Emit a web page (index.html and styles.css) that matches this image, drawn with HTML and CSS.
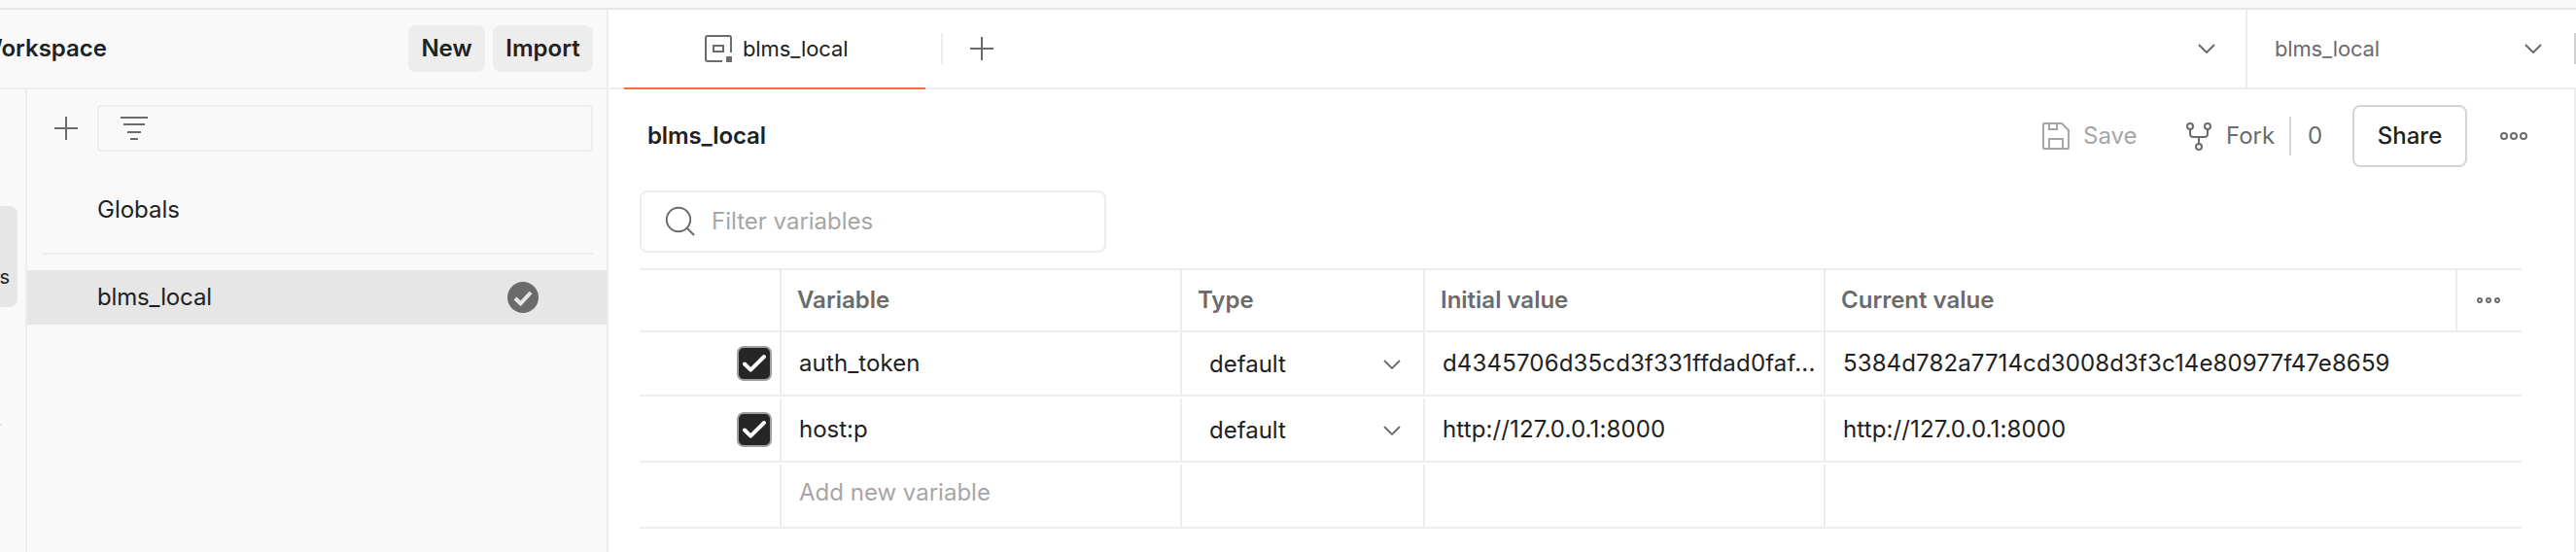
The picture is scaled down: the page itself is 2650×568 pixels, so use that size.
FILE: index.html
```html
<!DOCTYPE html>
<html lang="en">
<head>
<meta charset="utf-8">
<title>blms_local</title>
<link rel="stylesheet" href="styles.css">
</head>
<body>
<div class="app">
  <div class="topstrip"></div>
  <div class="main">
    <aside class="left">
      <header class="workspace-bar">
        <span class="workspace-name">Workspace</span>
        <div class="workspace-actions">
          <button class="btn-soft new">New</button>
          <button class="btn-soft import">Import</button>
        </div>
      </header>
      <div class="left-body">
        <nav class="rail">
          <div class="rail-item"><span>s</span></div>
          <div class="rail-sep"></div>
        </nav>
        <section class="env-list">
          <div class="env-tools">
            <svg class="plus" width="24" height="24" viewBox="0 0 24 24"><path d="M0 12H24M12 0V24" stroke="#6b6b6b" stroke-width="2"/></svg>
            <div class="env-filter">
              <svg width="28" height="24" viewBox="0 0 28 24"><path d="M0 1H28M3 8H25M7 16H21M10 23H18" stroke="#6b6b6b" stroke-width="2"/></svg>
            </div>
          </div>
          <div class="env-row globals">Globals</div>
          <div class="env-sep"></div>
          <div class="env-row selected">
            <span class="snug">blms_local</span>
            <svg width="32" height="32" viewBox="0 0 32 32"><circle cx="16" cy="16" r="16" fill="#6b6b6b"/><path d="M8 17L13.500 22.300L24 11" fill="none" stroke="#e6e6e6" stroke-width="4"/></svg>
          </div>
        </section>
      </div>
    </aside>
    <main class="right">
      <header class="tabbar">
        <div class="tab">
          <svg width="28" height="28" viewBox="0 0 28 28" fill="none" stroke="#6b6b6b" stroke-width="2"><path d="M27 18V3Q27 1 25 1H3Q1 1 1 3V25Q1 27 3 27H18"/><rect x="9" y="11" width="10" height="6"/><rect x="22" y="22" width="6" height="6" fill="#6b6b6b" stroke="none"/></svg>
          <span>blms_local</span>
        </div>
        <div class="tab-sep"></div>
        <svg class="tab-plus" width="24" height="24" viewBox="0 0 24 24"><path d="M0 12H24M12 0V24" stroke="#6b6b6b" stroke-width="2"/></svg>
        <svg class="tab-chevron" width="18" height="10" viewBox="0 0 18 10"><path d="M1 1L9 9L17 1" fill="none" stroke="#6b6b6b" stroke-width="2"/></svg>
        <div class="env-picker">
          <span class="snug">blms_local</span>
          <svg width="18" height="10" viewBox="0 0 18 10"><path d="M1 1L9 9L17 1" fill="none" stroke="#6b6b6b" stroke-width="2"/></svg>
        </div>
        <div class="edge-tick"></div>
      </header>
      <div class="content">
        <div class="title-row">
          <h1>blms_local</h1>
          <div class="actions">
            <div class="action save">
              <svg width="28" height="28" viewBox="0 0 28 28" fill="none" stroke="#a6a6a6" stroke-width="2"><path d="M2 1H20L27 8V26Q27 27 26 27H2Q1 27 1 26V2Q1 1 2 1ZM7 1V7H15V1M7 27V17H21V27"/></svg>
              <span>Save</span>
            </div>
            <div class="action fork">
              <svg width="26" height="30" viewBox="0 0 26 30" fill="none" stroke="#6b6b6b" stroke-width="2"><circle cx="4" cy="5" r="3"/><circle cx="22" cy="5" r="3"/><circle cx="13" cy="26" r="3"/><path d="M4 8V12.500Q4 16 7.500 16H18.500Q22 16 22 12.500V8M13 16V23"/></svg>
              <span>Fork</span>
            </div>
            <div class="fork-sep"></div>
            <span class="fork-count">0</span>
            <button class="share">Share</button>
            <svg class="more" width="28" height="10" viewBox="0 0 28 10" fill="none" stroke="#6b6b6b" stroke-width="2"><circle cx="4" cy="5" r="3"/><circle cx="14" cy="5" r="3"/><circle cx="24" cy="5" r="3"/></svg>
          </div>
        </div>
        <div class="search">
          <svg width="32" height="32" viewBox="0 0 32 32" fill="none" stroke="#6b6b6b" stroke-width="2"><circle cx="14" cy="14" r="12.200"/><path d="M22.500 22.500L30 30"/></svg>
          <span>Filter variables</span>
        </div>
        <div class="table">
          <div class="row head">
            <div class="cell"></div><div class="cell">Variable</div><div class="cell">Type</div><div class="cell">Initial value</div><div class="cell">Current value</div>
            <div class="cell options"><svg width="28" height="8" viewBox="0 0 28 8" fill="none" stroke="#6b6b6b" stroke-width="2"><circle cx="5" cy="4" r="2"/><circle cx="14" cy="4" r="2"/><circle cx="23" cy="4" r="2"/></svg></div>
          </div>
          <div class="row r1">
            <div class="cell check"><svg width="36" height="36" viewBox="0 0 36 36"><rect x="1" y="1" width="34" height="34" rx="6" fill="#262626" stroke="#a0a0a0" stroke-width="2"/><path d="M8 18.500L14.200 24.700L28 11" fill="none" stroke="#fff" stroke-width="4" stroke-linecap="round" stroke-linejoin="round"/></svg></div>
            <div class="cell value">auth_token</div>
            <div class="cell type"><span>default</span><svg width="18" height="10" viewBox="0 0 18 10"><path d="M1 1L9 9L17 1" fill="none" stroke="#6b6b6b" stroke-width="1.800"/></svg></div>
            <div class="cell value truncated">d4345706d35cd3f331ffdad0faf...</div>
            <div class="cell value">5384d782a7714cd3008d3f3c14e80977f47e8659</div>
          </div>
          <div class="row r2">
            <div class="cell check"><svg width="36" height="36" viewBox="0 0 36 36"><rect x="1" y="1" width="34" height="34" rx="6" fill="#262626" stroke="#a0a0a0" stroke-width="2"/><path d="M8 18.500L14.200 24.700L28 11" fill="none" stroke="#fff" stroke-width="4" stroke-linecap="round" stroke-linejoin="round"/></svg></div>
            <div class="cell">host:p</div>
            <div class="cell type"><span>default</span><svg width="18" height="10" viewBox="0 0 18 10"><path d="M1 1L9 9L17 1" fill="none" stroke="#6b6b6b" stroke-width="1.800"/></svg></div>
            <div class="cell value">http://127.0.0.1:8000</div>
            <div class="cell value">http://127.0.0.1:8000</div>
          </div>
          <div class="row r3">
            <div class="cell"></div><div class="cell placeholder">Add new variable</div><div class="cell"></div><div class="cell"></div><div class="cell"></div>
          </div>
        </div>
      </div>
    </main>
  </div>
</div>
</body>
</html>
```
FILE: styles.css
```css
* { box-sizing: border-box; }
body { margin: 0; font-family: Inter, "Liberation Sans", sans-serif; font-size: 24px; line-height: 32px; color: #212121; background: #fff; }
svg { display: block; flex: none; }
button { font: inherit; color: inherit; padding: 0; }
.app { width: 2650px; height: 568px; overflow: hidden; display: flex; flex-direction: column; }
.topstrip { height: 10px; flex: none; background: #f9f9f9; border-bottom: 2px solid #e6e6e6; }
.main { flex: 1; display: flex; min-height: 0; }
.snug { letter-spacing: -0.15px; }

/* Sidebar */
.left { width: 626px; flex: none; background: #f9f9f9; border-right: 2px solid #ededed; display: flex; flex-direction: column; }
.workspace-bar { height: 82px; flex: none; border-bottom: 2px solid #ededed; display: flex; align-items: center; justify-content: space-between; padding-right: 14px; font-weight: 600; }
.workspace-name { width: 110px; display: flex; justify-content: flex-end; white-space: nowrap; }
.workspace-actions { display: flex; gap: 8px; }
.btn-soft { height: 48px; border: 0; border-radius: 8px; background: #ededed; font-weight: 600; }
.new { width: 79px; }
.import { width: 103px; }
.left-body { flex: 1; display: flex; }
.rail { width: 28px; flex: none; border-right: 2px solid #ededed; padding-top: 120px; }
.rail-item { width: 18px; height: 104px; border-radius: 0 8px 8px 0; background: #e6e6e6; font-size: 20px; line-height: 24px; padding: 61px 8px 0 0; display: flex; justify-content: flex-end; }
.rail-sep { width: 2px; height: 2px; margin-top: 120px; background: #e6e6e6; }
.env-list { flex: 1; }
.env-tools { display: flex; align-items: center; padding: 16px 14px 0 28px; gap: 20px; }
.env-filter { flex: 1; height: 48px; border: 2px solid #ededed; border-radius: 4px; display: flex; align-items: center; padding-left: 22px; }
.env-row { height: 56px; display: flex; align-items: center; justify-content: space-between; padding: 0 70px 0 72px; }
.globals { margin-top: 32px; }
.env-sep { height: 2px; margin: 16px 14px 16px 16px; background: #ededed; }
.selected { background: #e6e6e6; }

/* Tab bar */
.right { flex: 1; min-width: 0; display: flex; flex-direction: column; }
.tabbar { height: 82px; flex: none; border-bottom: 2px solid #ededed; display: flex; align-items: center; font-size: 22px; }
.tab { width: 310px; height: 82px; margin: 0 16px 0 16px; align-self: flex-start; border-bottom: 2px solid #f0733f; display: flex; align-items: center; gap: 11px; padding-left: 83px; letter-spacing: -0.1px; }
.tab-sep { width: 2px; height: 32px; background: #ededed; }
.tab-plus { margin-left: 28px; }
.tab-chevron { margin-left: auto; }
.env-picker { width: 338px; height: 80px; margin-left: 31px; border-left: 2px solid #ededed; display: flex; align-items: center; justify-content: space-between; padding: 0 33px 0 28px; color: #6b6b6b; }
.edge-tick { width: 2px; height: 32px; background: #d0d0d0; }

/* Environment editor */
.content { flex: 1; border-right: 2px solid #ededed; padding: 16px 46px 0 32px; }
.title-row { height: 64px; display: flex; align-items: center; justify-content: space-between; padding-left: 8px; }
h1 { margin: 0; font-size: 24px; font-weight: 600; letter-spacing: -0.15px; }
.actions { display: flex; align-items: center; color: #6b6b6b; }
.action { display: flex; align-items: center; }
.save { width: 148px; gap: 14px; color: #a6a6a6; }
.fork { width: 106px; gap: 15px; }
.fork-sep { width: 2px; height: 40px; background: #d4d4d4; }
.fork-count { width: 63px; padding-left: 17px; }
.share { width: 118px; height: 64px; border: 2px solid #d4d4d4; border-radius: 8px; background: #fff; color: #212121; font-weight: 500; }
.more { margin: 0 2px 0 34px; }
.search { width: 480px; height: 64px; margin-top: 24px; border: 2px solid #ededed; border-radius: 8px; display: flex; align-items: center; gap: 16px; padding-left: 24px; color: #a6a6a6; }

/* Variables table */
.table { margin: 16px 8px 0 0; width: 1936px; border-top: 2px solid #ededed; }
.row { display: grid; grid-template-columns: 146px 412px 250px 412px 1fr; border-bottom: 2px solid #ededed; height: 68px; }
.head { grid-template-columns: 146px 412px 250px 412px 650px 1fr; height: 64px; color: #6b6b6b; font-weight: 600; }
.r1 { height: 66px; }
.r2, .r3 { padding-top: 2px; }
.cell { display: flex; align-items: center; border-right: 2px solid #ededed; padding-left: 18px; white-space: nowrap; min-width: 0; }
.cell:last-child { border-right: 0; }
.head .cell { padding-left: 16px; }
.head .options { padding-left: 18px; }
.check { justify-content: flex-end; padding-right: 8px; }
.type { justify-content: space-between; padding: 2px 23px 0 28px; }
.value { letter-spacing: 0.12px; }
.truncated { letter-spacing: 0.17px; }
.placeholder { color: #a6a6a6; padding-bottom: 6px; }
```
